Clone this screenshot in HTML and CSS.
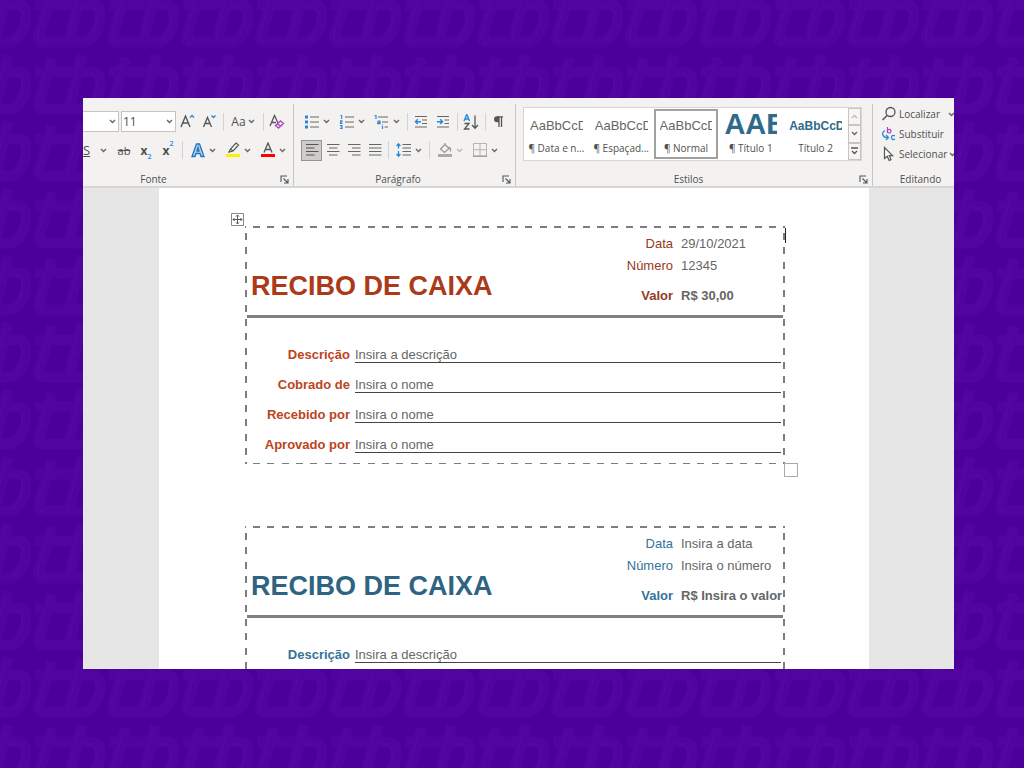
FILE: index.html
```html
<!DOCTYPE html>
<html lang="pt-BR">
<head>
<meta charset="utf-8">
<title>Recibo de caixa</title>
<link rel="stylesheet" href="styles.css">
</head>
<body>
<svg class="backdrop" aria-hidden="true">
  <defs>
    <pattern id="motif" width="74" height="67" patternUnits="userSpaceOnUse" x="31" y="50">
      <g fill="none" stroke="#50069e" stroke-width="11" stroke-linejoin="round">
        <path d="M21 8 L8 52 Q6 60 15 59 H54 Q64 56 69 38 Q72 22 60 22 H4 M51 5 L38 58"/>
      </g>
      <path d="M18 12 L7 50 Q5 58 12 60 M48 10 L37 56 M50 24 H59 Q67 24 65 40 Q62 54 54 58" fill="none" stroke="#540aa1" stroke-width="1"/>
    </pattern>
  </defs>
  <rect width="100%" height="100%" fill="url(#motif)"/>
</svg>

<svg class="defs" aria-hidden="true">
  <symbol id="chev" viewBox="0 0 7 5"><path d="M1 1 L3.500 3.500 L6 1" fill="none" stroke="#666" stroke-width="1.400"/></symbol>
  <symbol id="launch" viewBox="0 0 9 9"><path d="M1 7 V1 H7 M3.500 3.500 L7.500 7.500 M8 4 V8 H4" fill="none" stroke="#555" stroke-width="1.100"/></symbol>
</svg>

<main class="window">
  <div class="ribbon" role="toolbar" aria-label="Página Inicial">
    <section class="group group-font">
      <div class="row row-top">
        <select class="combo combo-name" aria-label="Fonte"><option></option></select>
        <select class="combo combo-size" aria-label="Tamanho"><option>11</option></select>
        <button class="tool" aria-label="Aumentar fonte"><svg class="icon" viewBox="0 0 16 16"><path d="M2 13 L6.500 2 L11 13 M3.500 9 H9.500" fill="none" stroke="#555" stroke-width="1.400"/><path d="M11 3.500 L13 1.500 L15 3.500" fill="none" stroke="#2b88d8" stroke-width="1.300"/></svg></button>
        <button class="tool" aria-label="Diminuir fonte"><svg class="icon" viewBox="0 0 16 16"><path d="M2.500 13 L6.500 3.500 L10.500 13 M4 9.500 H9" fill="none" stroke="#555" stroke-width="1.300"/><path d="M10.500 1.500 L12.500 3.500 L14.500 1.500" fill="none" stroke="#2b88d8" stroke-width="1.300"/></svg></button>
        <span class="sep"></span>
        <button class="tool tool-case" aria-label="Maiúsculas e minúsculas">Aa<svg class="chev"><use href="#chev"/></svg></button>
        <span class="sep"></span>
        <button class="tool" aria-label="Limpar formatação"><svg class="icon" viewBox="0 0 16 16"><path d="M1 12 L5.500 1.500 L9.500 10 M2.500 8.500 H7" fill="none" stroke="#555" stroke-width="1.300"/><path d="M6.500 11.500 L11.500 7 L14.500 9.500 L9.500 14 Z M8.500 9.700 L11.500 12.200" fill="#f6e8fa" stroke="#a54fbd" stroke-width="1.400"/></svg></button>
      </div>
      <div class="row">
        <button class="tool tool-under" aria-label="Sublinhado"><u>S</u><svg class="chev"><use href="#chev"/></svg></button>
        <button class="tool" aria-label="Tachado"><s>ab</s></button>
        <button class="tool tool-script" aria-label="Subscrito"><b>x</b><sub>2</sub></button>
        <button class="tool tool-script" aria-label="Sobrescrito"><b>x</b><sup>2</sup></button>
        <span class="sep"></span>
        <button class="tool split" aria-label="Efeitos de texto"><svg class="icon" viewBox="0 0 16 16"><path d="M2 14.500 L6.500 2 H9.500 L14 14.500 H11 L10 11.500 H6 L5 14.500 Z M7 9 H9 L8 5.500 Z" fill="#a9d2f3" stroke="#2374bd" stroke-width="1.300"/></svg><svg class="chev"><use href="#chev"/></svg></button>
        <button class="tool split" aria-label="Realce"><svg class="icon" viewBox="0 0 16 16"><path d="M4 10 L5.500 7 L11 1 L13.500 3 L8 9 Z M5.500 7 L8 9" fill="#fafafa" stroke="#555" stroke-width="1.200"/><path d="M1 12 H15 V15 H1 Z" fill="#fff200"/></svg><svg class="chev"><use href="#chev"/></svg></button>
        <button class="tool split" aria-label="Cor da fonte"><svg class="icon" viewBox="0 0 16 16"><path d="M4 10.500 L8 1 L12 10.500 M5.300 7.500 H10.700" fill="none" stroke="#555" stroke-width="1.300"/><path d="M1 12 H15 V15 H1 Z" fill="#f00"/></svg><svg class="chev"><use href="#chev"/></svg></button>
      </div>
      <footer class="caption"><span>Fonte</span><button class="launcher" aria-label="Opções de fonte"><svg><use href="#launch"/></svg></button></footer>
    </section>

    <section class="group group-par">
      <div class="row row-top">
        <button class="tool split" aria-label="Marcadores"><svg class="icon" viewBox="0 0 16 16"><path d="M1 1.500 h3 v3 h-3z M1 6.500 h3 v3 h-3z M1 11.500 h3 v3 h-3z" fill="#2b88d8"/><path d="M6 3 H15 M6 8 H15 M6 13 H15" stroke="#666" stroke-width="1.200"/></svg><svg class="chev"><use href="#chev"/></svg></button>
        <button class="tool split" aria-label="Numeração"><svg class="icon" viewBox="0 0 16 16"><path d="M1.500 1.500 H2.700 V5 M1 6.800 H3 V8 H1.500 V9.500 H3.500 M1 11.500 H3 V14.500 H1 M1.500 13 H3" fill="none" stroke="#2b88d8" stroke-width="1.100"/><path d="M6 3 H15 M6 8 H15 M6 13 H15" stroke="#666" stroke-width="1.200"/></svg><svg class="chev"><use href="#chev"/></svg></button>
        <button class="tool split" aria-label="Lista de vários níveis"><svg class="icon" viewBox="0 0 16 16"><path d="M.5 1.500 H2 V5 M3.500 7 H6 V9.700 H3.800 V8.400 H6 M8.500 12 V15 M8.500 10.500 V11.300" fill="none" stroke="#2b88d8" stroke-width="1.200"/><path d="M4 3 H14 M8 8 H14 M10.500 13 H14" stroke="#666" stroke-width="1.200"/></svg><svg class="chev"><use href="#chev"/></svg></button>
        <span class="sep"></span>
        <button class="tool" aria-label="Diminuir recuo"><svg class="icon" viewBox="0 0 16 16"><path d="M2 2.500 H14 M9 6 H14 M9 9.500 H14 M2 13 H14" stroke="#666" stroke-width="1.200"/><path d="M8 7.700 H2.500 M4.800 5.300 L2.400 7.700 L4.800 10.100" fill="none" stroke="#2b88d8" stroke-width="1.400"/></svg></button>
        <button class="tool" aria-label="Aumentar recuo"><svg class="icon" viewBox="0 0 16 16"><path d="M2 2.500 H14 M9.500 6 H14 M9.500 9.500 H14 M2 13 H14" stroke="#666" stroke-width="1.200"/><path d="M2 7.700 H7.500 M5.200 5.300 L7.600 7.700 L5.200 10.100" fill="none" stroke="#2b88d8" stroke-width="1.400"/></svg></button>
        <span class="sep"></span>
        <button class="tool" aria-label="Classificar"><svg class="icon" viewBox="0 0 16 16"><path d="M1 7 L3.800 .5 L6.600 7 M2 5 H5.600" fill="none" stroke="#2b88d8" stroke-width="1.400"/><path d="M1.500 9.500 H6 L1.500 15 H6.500 M12 1.500 V14 M9 11 L12 14.200 L15 11" fill="none" stroke="#555" stroke-width="1.300"/></svg></button>
        <span class="sep"></span>
        <button class="tool" aria-label="Mostrar tudo"><svg class="icon" viewBox="0 0 16 16"><path d="M8 3 V13 M10.500 3 V13 M12 2.800 H6" fill="none" stroke="#555" stroke-width="1.300"/><path d="M8 2.200 H6 A3 3 0 0 0 6 8.200 H8 Z" fill="#555"/></svg></button>
      </div>
      <div class="row row-align">
        <button class="tool align active" aria-label="Alinhar à esquerda"><svg class="icon" viewBox="0 0 16 16"><path d="M2 2.500 H14.500 M2 6 H10.500 M2 9.500 H14.500 M2 13 H10.500" stroke="#555" stroke-width="1.200"/></svg></button>
        <button class="tool align" aria-label="Centralizar"><svg class="icon" viewBox="0 0 16 16"><path d="M2 2.500 H14.500 M4 6 H12.500 M2 9.500 H14.500 M4 13 H12.500" stroke="#666" stroke-width="1.200"/></svg></button>
        <button class="tool align" aria-label="Alinhar à direita"><svg class="icon" viewBox="0 0 16 16"><path d="M2 2.500 H14.500 M6 6 H14.500 M2 9.500 H14.500 M6 13 H14.500" stroke="#666" stroke-width="1.200"/></svg></button>
        <button class="tool align" aria-label="Justificar"><svg class="icon" viewBox="0 0 16 16"><path d="M2 2.500 H14.500 M2 6 H14.500 M2 9.500 H14.500 M2 13 H14.500" stroke="#666" stroke-width="1.200"/></svg></button>
        <span class="sep"></span>
        <button class="tool split" aria-label="Espaçamento"><svg class="icon" viewBox="0 0 16 16"><path d="M6.500 2.500 H15 M6.500 6 H15 M6.500 9.500 H15 M6.500 13 H15" stroke="#666" stroke-width="1.200"/><path d="M2.500 2 V6.500 M.6 4 L2.500 1.800 L4.400 4 M2.500 9 V14 M.6 12 L2.500 14.200 L4.400 12" fill="none" stroke="#2b88d8" stroke-width="1.300"/></svg><svg class="chev"><use href="#chev"/></svg></button>
        <span class="sep"></span>
        <button class="tool split" aria-label="Sombreamento"><svg class="icon" viewBox="0 0 16 16"><path d="M3.500 7 L8 2.500 L12 6.500 L7.500 10.500 Z M8 2.500 V1 M12 5 Q14 6 13.500 9.500" fill="none" stroke="#999" stroke-width="1.300"/><path d="M1 12 H15 V15 H1 Z" fill="#aaa"/></svg><svg class="chev faded"><use href="#chev"/></svg></button>
        <button class="tool split" aria-label="Bordas"><svg class="icon" viewBox="0 0 16 16"><path d="M1.500 1.500 H14.500 V14 M1.500 1.500 V14 M8 1.500 V14 M1.500 7.700 H14.500" fill="none" stroke="#b5b5b5"/><path d="M1 14.200 H15" stroke="#999" stroke-width="1.400"/></svg><svg class="chev"><use href="#chev"/></svg></button>
      </div>
      <footer class="caption"><span>Parágrafo</span><button class="launcher" aria-label="Opções de parágrafo"><svg><use href="#launch"/></svg></button></footer>
    </section>

    <section class="group group-styles">
      <div class="gallery">
        <button class="style"><span class="sample">AaBbCcD</span><span class="style-name">¶ Data e n...</span></button>
        <button class="style"><span class="sample">AaBbCcD</span><span class="style-name">¶ Espaçad...</span></button>
        <button class="style chosen"><span class="sample">AaBbCcD</span><span class="style-name">¶ Normal</span></button>
        <button class="style"><span class="sample sample-h1">AAB</span><span class="style-name">¶ Título 1</span></button>
        <button class="style"><span class="sample sample-h2">AaBbCcD</span><span class="style-name">Título 2</span></button>
        <div class="scroller">
          <button aria-label="Acima"><svg class="chev faded flip"><use href="#chev"/></svg></button>
          <button aria-label="Abaixo"><svg class="chev"><use href="#chev"/></svg></button>
          <button aria-label="Mais"><svg class="more" viewBox="0 0 7 8"><path d="M0 1 H7 M1 4 L3.500 6.500 L6 4" fill="none" stroke="#555" stroke-width="1.300"/></svg></button>
        </div>
      </div>
      <footer class="caption"><span>Estilos</span><button class="launcher" aria-label="Opções de estilos"><svg><use href="#launch"/></svg></button></footer>
    </section>

    <section class="group group-edit">
      <div class="commands">
        <button class="command"><svg class="icon" viewBox="0 0 16 16"><circle cx="9.500" cy="6" r="4.500" fill="none" stroke="#555" stroke-width="1.300"/><path d="M6.300 9.300 L1.500 14" stroke="#555" stroke-width="1.500"/></svg><span>Localizar</span><svg class="chev push"><use href="#chev"/></svg></button>
        <button class="command"><svg class="icon" viewBox="0 0 16 16"><path d="M6.500 1 V7 M6.500 4 Q10 2.500 10 5.200 Q9.500 7.800 6.500 6.500" fill="none" stroke="#b146c2" stroke-width="1.300"/><path d="M4 4.500 Q0 7 2.500 10 Q4 12 7 11.500 M5 9 L7.500 11.500 L5 14 M14 9.800 Q10.500 8.500 10.500 11.500 Q10.500 14.500 14 13.200" fill="none" stroke="#2b88d8" stroke-width="1.300"/></svg><span>Substituir</span></button>
        <button class="command"><svg class="icon" viewBox="0 0 16 16"><path d="M3.500 1.500 V12.500 L6.200 10.300 L8.200 14.500 L10 13.600 L8.200 9.600 H11.500 Z" fill="#fff" stroke="#555" stroke-width="1.200"/></svg><span>Selecionar</span><svg class="chev"><use href="#chev"/></svg></button>
      </div>
      <footer class="caption"><span>Editando</span></footer>
    </section>
  </div>

  <div class="workspace">
    <article class="page">
      <section class="receipt red">
        <svg class="move" viewBox="0 0 13 13" aria-hidden="true"><path d="M.5 .5 H12.500 V12.500 H.5 Z" fill="#fff" stroke="#888"/><path d="M6.500 2 V11 M2 6.500 H11 M5 3.500 L6.500 2 L8 3.500 M5 9.500 L6.500 11 L8 9.500 M3.500 5 L2 6.500 L3.500 8 M9.500 5 L11 6.500 L9.500 8" fill="none" stroke="#555"/></svg>
        <span class="caret"></span>
        <span class="resize"></span>
        <header class="head">
          <h1>RECIBO DE CAIXA</h1>
          <dl class="meta">
            <dt>Data</dt><dd>29/10/2021</dd>
            <dt>Número</dt><dd>12345</dd>
            <dt class="total">Valor</dt><dd class="total">R$ 30,00</dd>
          </dl>
        </header>
        <dl class="fields">
          <dt>Descrição</dt><dd>Insira a descrição</dd>
          <dt>Cobrado de</dt><dd>Insira o nome</dd>
          <dt>Recebido por</dt><dd>Insira o nome</dd>
          <dt>Aprovado por</dt><dd>Insira o nome</dd>
        </dl>
      </section>
      <section class="receipt blue">
        <header class="head">
          <h1>RECIBO DE CAIXA</h1>
          <dl class="meta">
            <dt>Data</dt><dd>Insira a data</dd>
            <dt>Número</dt><dd>Insira o número</dd>
            <dt class="total">Valor</dt><dd class="total">R$ Insira o valor</dd>
          </dl>
        </header>
        <dl class="fields">
          <dt>Descrição</dt><dd>Insira a descrição</dd>
        </dl>
      </section>
    </article>
  </div>
</main>
</body>
</html>
```
FILE: styles.css
```css
* { box-sizing: border-box; }
html, body { height: 100%; }
body {
  margin: 0;
  padding: 98px 70px 99px 83px;
  background: #4b0099;
  overflow: hidden;
  font-family: "Open Sans", "Noto Sans", sans-serif;
}
button { margin: 0; padding: 0; border: 0; background: none; font: inherit; color: inherit; }
dl, dd, h1 { margin: 0; }

.backdrop { position: absolute; inset: 0; width: 100%; height: 100%; z-index: -1; }
.defs { position: absolute; width: 0; height: 0; }

.window {
  display: flex;
  flex-direction: column;
  height: 100%;
  overflow: hidden;
  background: #e6e6e6;
}

/* Ribbon */
.ribbon {
  display: flex;
  flex: none;
  height: 90px;
  padding-top: 6px;
  overflow: hidden;
  background: #f3f2f1;
  border-bottom: 2px solid #d8d6d4;
  color: #505050;
  font-size: 10px;
}
.group { display: flex; flex-direction: column; flex: none; border-right: 1px solid #c8c6c4; }
.group-font { width: 211px; }
.group-par { width: 222px; padding-left: 5px; }
.group-styles { flex: 1 0 340px; min-width: 0; padding-left: 7px; }
.group-edit { width: 81px; border-right: 0; }

.row { display: flex; align-items: center; height: 22px; }
.row-top { height: 35px; }
.row-align { padding-left: 2px; }
.sep { flex: none; width: 1px; height: 18px; margin: 0 2px 0 3px; background: #d5d3d1; }
.icon { flex: none; width: 16px; height: 16px; display: block; }
.chev { flex: none; width: 7px; height: 5px; }
.faded { opacity: .4; }
.flip { transform: rotate(180deg); }

.combo {
  appearance: none;
  height: 21px;
  border: 1px solid #c6c4c2;
  border-radius: 0;
  color: #505050;
  font: 12px "Open Sans", sans-serif;
  background: #fff url("data:image/svg+xml,%3Csvg xmlns='http://www.w3.org/2000/svg' width='7' height='5'%3E%3Cpath d='M1 1L3.500 3.500L6 1' fill='none' stroke='%23666' stroke-width='1.400'/%3E%3C/svg%3E") no-repeat right 2px center;
}
.combo-name { width: 36px; margin-right: 2px; border-left: 0; }
.combo-size { width: 55px; padding: 0 1px; }

.tool { display: flex; flex: none; align-items: center; justify-content: center; width: 22px; height: 21px; }
.tool s { font-size: 11px; }
.tool-case { width: 34px; gap: 2px; font-size: 12px; }
.tool-under { width: 30px; gap: 10px; font-size: 13px; justify-content: flex-start; }
.tool-script b { font-size: 12px; }
.tool-script sub, .tool-script sup { color: #2b88d8; font-size: 7px; font-weight: 600; line-height: 8px; }
.tool-script sub { align-self: flex-end; }
.tool-script sup { align-self: flex-start; }
.split { width: 35px; gap: 3px; }
.align { width: 21px; }
.active { background: #cfcdcb; border: 1px solid #979593; }

.caption { display: flex; align-items: center; height: 14px; margin-top: auto; padding-right: 4px; }
.caption span { flex: 1; text-align: center; }
.group-font .caption span { padding-right: 56px; }
.group-par .caption, .group-styles .caption { margin-left: -5px; }
.group-edit .caption { padding-left: 18px; }
.launcher { width: 9px; height: 9px; }
.launcher svg { display: block; width: 9px; height: 9px; }

/* Style gallery */
.gallery { display: flex; height: 54px; margin: 3px 10px 0 0; background: #fff; border: 1px solid #d8d6d4; }
.style { flex: 1 1 0; min-width: 0; display: flex; flex-direction: column; height: 50px; margin-top: 1px; padding: 0 4px; border: 2px solid transparent; }
.chosen { border-color: #a3a19f; }
.sample { display: block; width: 100%; height: 30px; overflow: hidden; color: #666; font: 13px/30px "Liberation Sans", Arial, sans-serif; white-space: nowrap; text-align: left; }
.sample-h1 { color: #2e6b8a; font-size: 29px; line-height: 27px; font-weight: bold; }
.sample-h2 { color: #2e6b8a; font-weight: bold; font-size: 12px; }
.style-name { align-self: center; height: 16px; line-height: 14px; white-space: nowrap; text-align: center; }
.scroller { display: flex; flex-direction: column; flex: none; width: 13px; }
.scroller button { flex: 1; display: flex; align-items: center; justify-content: center; border: 1px solid #c8c6c4; background: #f6f5f4; }
.more { width: 7px; height: 8px; }

.commands { display: flex; flex-direction: column; padding-left: 8px; }
.command { display: flex; align-items: center; height: 20px; gap: 2px; text-align: left; white-space: nowrap; }
.push { margin-left: 6px; }

/* Document */
.workspace { flex: 1; min-height: 0; padding: 0 85px 0 76px; overflow: hidden; }
.page {
  height: 100%;
  padding: 38px 84px 0 86px;
  overflow: hidden;
  background: #fff;
  color: #666;
  font: 13px/16px "Liberation Sans", Arial, sans-serif;
}
.receipt {
  --dash: #7d7d7d 0 7px, transparent 7px 14px, #7d7d7d 14px 21px, transparent 21px 29px, #7d7d7d 29px 36px, transparent 36px 43px;
  position: relative;
  height: 238px;
  margin-bottom: 62px;
  padding: 2px 2px 0 2px;
  background:
    linear-gradient(to right, var(--dash)) 8px 0 / 43px 2px repeat-x,
    linear-gradient(to right, var(--dash)) 8px 100% / 43px 1px repeat-x,
    linear-gradient(to bottom, var(--dash)) 0 7px / 2px 43px repeat-y,
    linear-gradient(to bottom, var(--dash)) 100% 7px / 2px 43px repeat-y;
}
.move { position: absolute; left: -14px; top: -13px; width: 13px; height: 13px; }
.caret { position: absolute; right: -1px; top: 2px; width: 1px; height: 15px; background: #222; }
.resize { position: absolute; right: -13px; bottom: -13px; width: 14px; height: 14px; border: 1px solid #aaa; background: #fff; }

.head { display: flex; justify-content: space-between; height: 90px; border-bottom: 3px solid #808080; }
h1 { padding: 42px 0 0 4px; font-size: 27px; line-height: 32px; white-space: nowrap; }
.meta { display: grid; grid-template-columns: 60px 102px; grid-auto-rows: 22px; column-gap: 8px; padding-top: 8px; align-content: start; }
.meta dt { text-align: right; }
.meta dd { white-space: nowrap; }
.total { padding-top: 8px; font-weight: bold; }

.fields { display: grid; grid-template-columns: 103px 1fr; grid-auto-rows: 30px; column-gap: 5px; padding: 15px 2px 0 0; }
.fields dt { padding-top: 15px; text-align: right; font-weight: bold; }
.fields dd { padding-top: 15px; line-height: 14px; border-bottom: 1px solid #444; }
.fields dt { line-height: 14px; }

.red h1 { color: #ab3a18; }
.red .meta dt { color: #963a22; }
.red .fields dt { color: #bc4420; }
.blue h1 { color: #2e6482; }
.blue dt { color: #35739a; }
```
